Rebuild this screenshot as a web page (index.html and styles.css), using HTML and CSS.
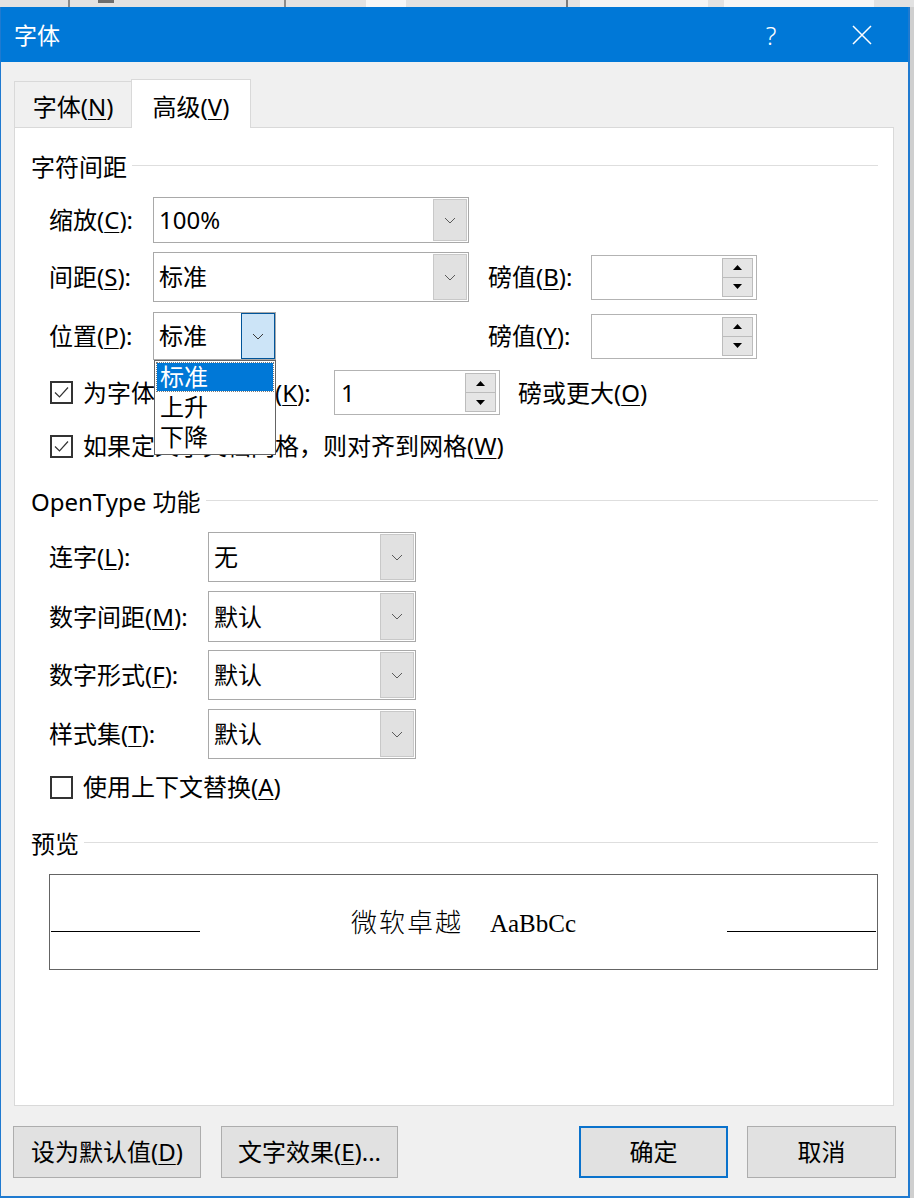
FILE: index.html
```html
<!DOCTYPE html>
<html lang="zh-CN">
<head>
<meta charset="utf-8">
<title>字体</title>
<link rel="stylesheet" href="styles.css">
</head>
<body>
<div class="bgstrip">
  <span class="seg seg-a"></span>
  <span class="seg seg-b"></span>
  <span class="seg seg-c"></span>
  <span class="seg seg-d"></span>
  <span class="seg seg-e"></span>
  <span class="seg seg-f"></span>
  <span class="seg seg-g"></span>
  <span class="seg seg-h"></span>
</div>
<div class="dialog">
  <div class="titlebar">
    <span class="title">字体</span>
    <span class="help">?</span>
    <span class="close"><svg width="20" height="20" viewBox="0 0 20 20"><path d="M1 1L19 19M19 1L1 19" stroke="#fff" stroke-width="1.5" fill="none"/></svg></span>
  </div>
  <div class="body">
    <div class="tabs">
      <div class="tab">字体(<u>N</u>)</div>
      <div class="tab active">高级(<u>V</u>)</div>
    </div>
    <div class="panel">
      <div class="head"><span>字符间距</span><i class="rule"></i></div>

      <div class="row r1">
        <span class="lab lab-a">缩放(<u>C</u>):</span>
        <div class="combo w-wide">
          <span class="val">100%</span>
          <span class="drop"><svg width="12" height="7" viewBox="0 0 12 7"><path d="M1 1L6 6L11 1" stroke="#5a5a5a" stroke-width="1" fill="none"/></svg></span>
        </div>
      </div>

      <div class="row r2">
        <span class="lab lab-a">间距(<u>S</u>):</span>
        <div class="combo w-wide">
          <span class="val">标准</span>
          <span class="drop"><svg width="12" height="7" viewBox="0 0 12 7"><path d="M1 1L6 6L11 1" stroke="#5a5a5a" stroke-width="1" fill="none"/></svg></span>
        </div>
        <span class="lab lab-pt gap-b">磅值(<u>B</u>):</span>
        <div class="spin">
          <span class="val"></span>
          <span class="arrows">
            <span class="up"><svg width="9" height="5" viewBox="0 0 9 5"><path d="M4.5 0L9 5H0Z" fill="#000"/></svg></span>
            <span class="dn"><svg width="9" height="5" viewBox="0 0 9 5"><path d="M0 0H9L4.5 5Z" fill="#000"/></svg></span>
          </span>
        </div>
      </div>

      <div class="row r3">
        <span class="lab lab-a">位置(<u>P</u>):</span>
        <div class="combo w-narrow open">
          <span class="val">标准</span>
          <span class="drop focus"><svg width="12" height="7" viewBox="0 0 12 7"><path d="M1 1L6 6L11 1" stroke="#3a3a3a" stroke-width="1" fill="none"/></svg></span>
          <div class="list">
            <div class="item sel">标准</div>
            <div class="item">上升</div>
            <div class="item">下降</div>
          </div>
        </div>
        <span class="lab lab-pt gap-y">磅值(<u>Y</u>):</span>
        <div class="spin">
          <span class="val"></span>
          <span class="arrows">
            <span class="up"><svg width="9" height="5" viewBox="0 0 9 5"><path d="M4.5 0L9 5H0Z" fill="#000"/></svg></span>
            <span class="dn"><svg width="9" height="5" viewBox="0 0 9 5"><path d="M0 0H9L4.5 5Z" fill="#000"/></svg></span>
          </span>
        </div>
      </div>

      <div class="row rk">
        <span class="cb"><svg width="19" height="19" viewBox="0 0 19 19"><path d="M3 9.5L7.5 14L16 4.5" stroke="#333" stroke-width="1.2" fill="none"/></svg></span>
        <span class="kern-text">为字体调整字间距(<u>K</u>):</span>
        <div class="spin">
          <span class="val">1</span>
          <span class="arrows">
            <span class="up"><svg width="9" height="5" viewBox="0 0 9 5"><path d="M4.5 0L9 5H0Z" fill="#000"/></svg></span>
            <span class="dn"><svg width="9" height="5" viewBox="0 0 9 5"><path d="M0 0H9L4.5 5Z" fill="#000"/></svg></span>
          </span>
        </div>
        <span class="after">磅或更大(<u>O</u>)</span>
      </div>

      <div class="row rw">
        <span class="cb"><svg width="19" height="19" viewBox="0 0 19 19"><path d="M3 9.5L7.5 14L16 4.5" stroke="#333" stroke-width="1.2" fill="none"/></svg></span>
        <span>如果定义了文档网格，则对齐到网格(<u>W</u>)</span>
      </div>

      <div class="head h2"><span>OpenType 功能</span><i class="rule"></i></div>

      <div class="row o1">
        <span class="lab lab-o">连字(<u>L</u>):</span>
        <div class="combo w-ot">
          <span class="val">无</span>
          <span class="drop"><svg width="12" height="7" viewBox="0 0 12 7"><path d="M1 1L6 6L11 1" stroke="#5a5a5a" stroke-width="1" fill="none"/></svg></span>
        </div>
      </div>
      <div class="row o2">
        <span class="lab lab-o">数字间距(<u>M</u>):</span>
        <div class="combo w-ot">
          <span class="val">默认</span>
          <span class="drop"><svg width="12" height="7" viewBox="0 0 12 7"><path d="M1 1L6 6L11 1" stroke="#5a5a5a" stroke-width="1" fill="none"/></svg></span>
        </div>
      </div>
      <div class="row o3">
        <span class="lab lab-o">数字形式(<u>F</u>):</span>
        <div class="combo w-ot">
          <span class="val">默认</span>
          <span class="drop"><svg width="12" height="7" viewBox="0 0 12 7"><path d="M1 1L6 6L11 1" stroke="#5a5a5a" stroke-width="1" fill="none"/></svg></span>
        </div>
      </div>
      <div class="row o4">
        <span class="lab lab-o">样式集(<u>T</u>):</span>
        <div class="combo w-ot">
          <span class="val">默认</span>
          <span class="drop"><svg width="12" height="7" viewBox="0 0 12 7"><path d="M1 1L6 6L11 1" stroke="#5a5a5a" stroke-width="1" fill="none"/></svg></span>
        </div>
      </div>

      <div class="row ra">
        <span class="cb"></span>
        <span>使用上下文替换(<u>A</u>)</span>
      </div>

      <div class="head h3"><span>预览</span><i class="rule"></i></div>

      <div class="preview">
        <i class="pline"></i>
        <span class="ptext"><span class="cjk">微软卓越</span><span class="lat">AaBbCc</span></span>
        <i class="pline"></i>
      </div>
    </div>

    <div class="footer">
      <div class="button b-default">设为默认值(<u>D</u>)</div>
      <div class="button b-effect">文字效果(<u>E</u>)...</div>
      <div class="button b-ok">确定</div>
      <div class="button b-cancel">取消</div>
    </div>
  </div>
</div>
</body>
</html>
```

FILE: styles.css
```css
* { box-sizing: border-box; }

html, body {
  margin: 0;
  padding: 0;
}

body {
  width: 914px;
  height: 1198px;
  overflow: hidden;
  background: #cfcfcf;
  font-family: "Noto Sans", "Noto Sans CJK SC", sans-serif;
  font-size: 24px;
  line-height: 32px;
  color: #000;
}

u {
  text-decoration-thickness: 1px;
  text-underline-offset: 3px;
}

/* background application strip above the dialog */
.bgstrip {
  height: 7px;
  display: flex;
  background: #e2e2e2;
}
.seg { display: block; height: 7px; }
.seg-a { width: 68px; }
.seg-b { width: 2px; background: #8a8a8a; margin-right: 28px; }
.seg-c { width: 16px; background: #6d6d6d; height: 3px; margin-right: 170px; }
.seg-d { width: 2px; background: #8a8a8a; margin-right: 80px; }
.seg-e { width: 40px; background: #f7f7f7; margin-right: 160px; }
.seg-f { width: 2px; background: #7a7a7a; margin-right: 12px; }
.seg-g { width: 128px; background: #f4f4f4; margin-right: 16px; }
.seg-h { width: 150px; background: #f6f6f6; }

/* dialog frame */
.dialog {
  width: 910px;
  height: 1191px;
  border-style: solid;
  border-color: #1f7ad0;
  border-width: 0 2px 2px 1px;
  background: #f0f0f0;
  display: flex;
  flex-direction: column;
}

.titlebar {
  height: 55px;
  flex: none;
  background: #0078d7;
  color: #fff;
  display: flex;
  align-items: center;
  padding: 0 23px 0 13px;
}
.title {
  font-size: 23px;
}
.help {
  margin-left: auto;
  width: 40px;
  text-align: center;
  font-size: 25px;
  font-weight: 300;
}
.close {
  width: 46px;
  margin-left: 48px;
  display: flex;
  justify-content: center;
  align-items: center;
}

.body {
  flex: 1;
  padding-top: 17px;
  display: flex;
  flex-direction: column;
}

/* tabs */
.tabs {
  height: 48px;
  display: flex;
  align-items: flex-end;
  margin-left: 13px;
}
.tab {
  height: 46px;
  width: 117px;
  border-top: 1px solid #d9d9d9;
  border-left: 1px solid #d9d9d9;
  display: flex;
  justify-content: center;
  align-items: center;
  padding-top: 4px;
}
.tab.active {
  height: 49px;
  width: 120px;
  margin-bottom: -1px;
  background: #fff;
  border: 1px solid #d9d9d9;
  border-bottom: none;
  position: relative;
  z-index: 1;
  padding-top: 5px;
}

/* tab panel */
.panel {
  height: 979px;
  flex: none;
  margin: 0 14px 0 13px;
  background: #fff;
  border: 1px solid #d9d9d9;
  padding: 23px 15px 0 16px;
}

.head {
  height: 32px;
  display: flex;
  align-items: center;
}
.head .rule {
  flex: 1;
  height: 1px;
  background: #dedede;
  margin: 0 0 4px 5px;
}
.h2 { margin-top: 26px; }
.h3 { margin-top: 27px; }

.row {
  display: flex;
  align-items: center;
  padding-left: 18px;
}
.r1 { margin-top: 14px; height: 46px; }
.r2 { margin-top: 9px; height: 50px; }
.r3 { margin-top: 10px; height: 48px; position: relative; z-index: 5; }
.rk { margin-top: 10px; height: 45px; }
.rw { margin-top: 17px; height: 28px; }
.o1 { margin-top: 14px; height: 50px; }
.o2 { margin-top: 9px; height: 51px; }
.o3 { margin-top: 8px; height: 50px; }
.o4 { margin-top: 9px; height: 50px; }
.ra { margin-top: 14px; height: 28px; }

.lab { flex: none; white-space: nowrap; }
.lab-a { width: 104px; }
.lab-o { width: 159px; }
.lab-pt { width: 103px; }
.gap-b { margin-left: 19px; }
.gap-y { margin-left: 212px; }

/* combo boxes */
.combo {
  align-self: stretch;
  display: flex;
  background: #fff;
  border: 1px solid #a9a9a9;
  position: relative;
  flex: none;
}
.w-wide { width: 316px; }
.w-narrow { width: 123px; }
.w-ot { width: 208px; }
.combo .val {
  flex: 1;
  padding-left: 5px;
  display: flex;
  align-items: center;
  white-space: nowrap;
}
.drop {
  width: 34px;
  margin: 1px 1px 1px 0;
  background: #e1e1e1;
  border: 1px solid #c8c8c8;
  display: flex;
  align-items: center;
  justify-content: center;
}
.drop.focus {
  margin: 0;
  background: #cce4f7;
  border-color: #005499;
}

/* open dropdown list */
.list {
  position: absolute;
  left: 0;
  top: calc(100% + 1px);
  width: 122px;
  background: #fff;
  border: 1px solid #646464;
  padding: 2px;
  z-index: 10;
}
.item {
  height: 30px;
  line-height: 30px;
  padding-left: 3px;
}
.item.sel {
  height: 28px;
  line-height: 28px;
  margin-bottom: 1px;
  background: #0078d7;
  color: #fff;
  outline: 1px dotted #7a7a7a;
}

/* spinners */
.spin {
  flex: none;
  width: 166px;
  height: 45px;
  display: flex;
  background: #fff;
  border: 1px solid #b3b3b3;
}
.spin .val {
  flex: 1;
  padding-left: 6px;
  display: flex;
  align-items: center;
}
.arrows {
  width: 31px;
  margin: 2px 3px 2px 0;
  display: flex;
  flex-direction: column;
}
.arrows span {
  flex: 1;
  background: #e5e5e5;
  border: 1px solid #bcbcbc;
  display: flex;
  align-items: center;
  justify-content: center;
}
.arrows .dn { margin-top: -1px; }

/* checkboxes */
.cb {
  flex: none;
  width: 23px;
  height: 23px;
  margin: 0 10px 0 1px;
  border: 2px solid #333;
  background: #fff;
  display: flex;
  align-items: center;
  justify-content: center;
}
.kern-text {
  width: 251px;
  white-space: nowrap;
  flex: none;
}
.after { margin-left: 18px; }

/* preview */
.preview {
  margin: 14px 0 0 18px;
  height: 96px;
  border: 1px solid #646464;
  display: flex;
  align-items: baseline;
  padding: 31px 1px 0;
}
.pline {
  width: 149px;
  height: 0;
  border-bottom: 1px solid #000;
  flex: none;
}
.ptext {
  flex: 1;
  text-align: center;
  font-size: 26px;
  line-height: 30px;
  font-family: "Liberation Serif", "Noto Sans CJK SC", serif;
}
.cjk {
  font-family: "Noto Sans CJK SC", sans-serif;
  font-weight: 300;
  letter-spacing: 2px;
}
.lat {
  font-size: 25px;
  margin-left: 27px;
}

/* footer buttons */
.footer {
  margin-top: 20px;
  height: 52px;
  display: flex;
  padding: 0 12px;
}
.button {
  height: 52px;
  background: #e1e1e1;
  border: 1px solid #adadad;
  display: flex;
  align-items: center;
  justify-content: center;
  white-space: nowrap;
}
.b-default { width: 188px; }
.b-effect { width: 177px; margin-left: 20px; }
.b-ok { width: 149px; margin-left: auto; border: 2px solid #0a72cc; }
.b-cancel { width: 149px; margin-left: 19px; }
```
